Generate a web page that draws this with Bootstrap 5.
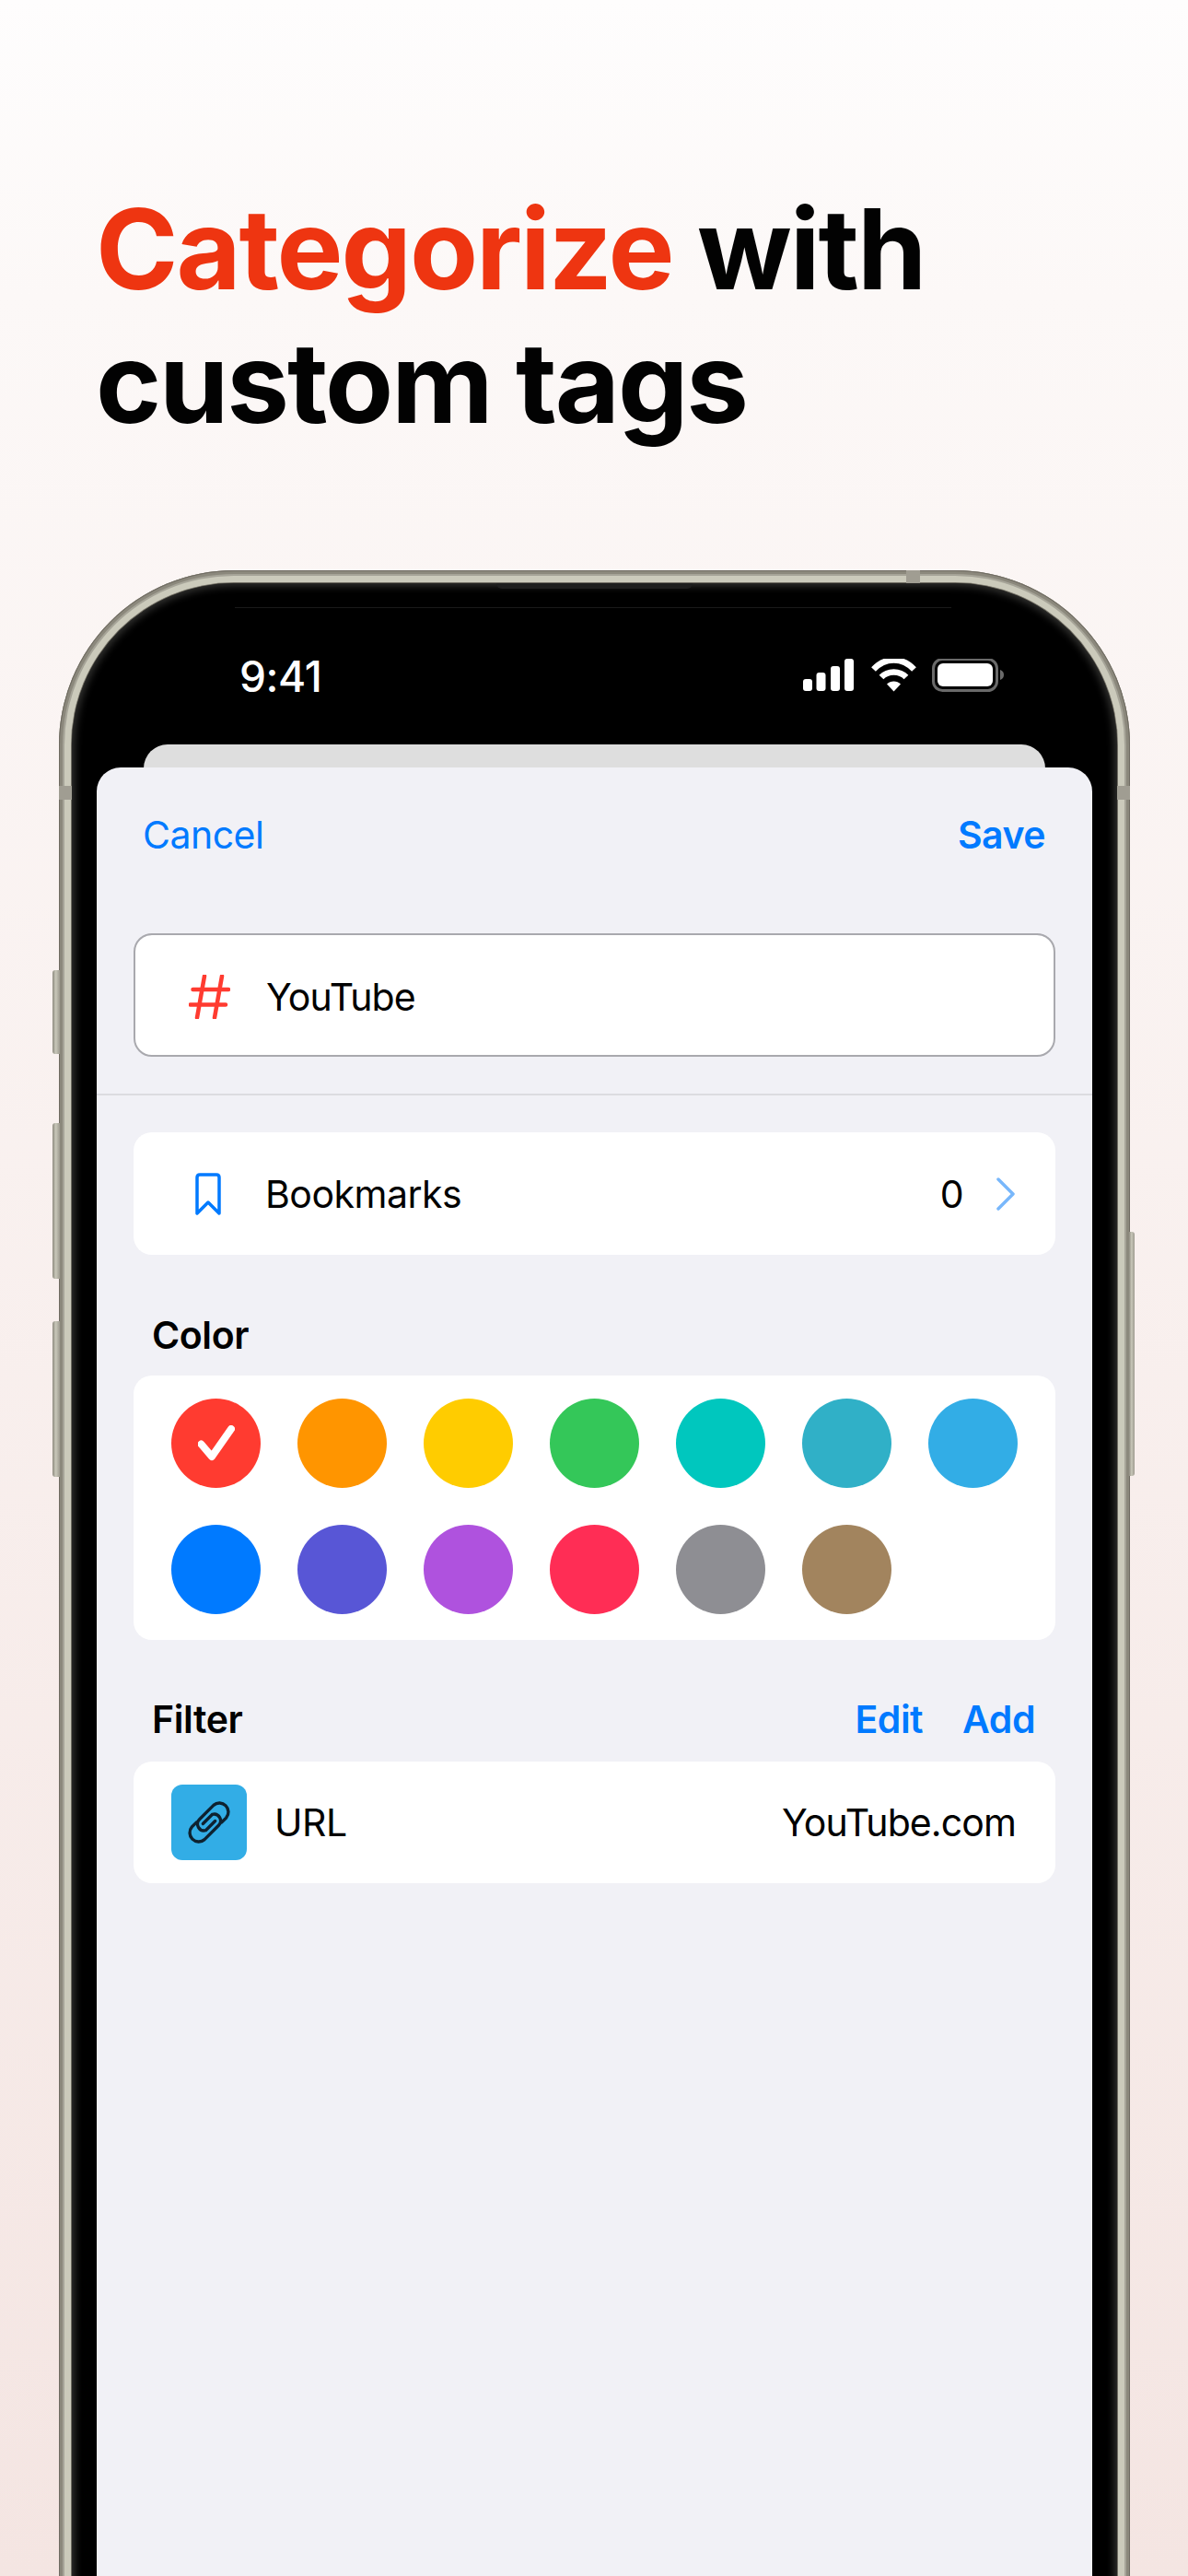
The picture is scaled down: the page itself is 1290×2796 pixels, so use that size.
<!DOCTYPE html>
<html lang="en">
<head>
<meta charset="utf-8">
<title>Categorize with custom tags</title>
<link rel="stylesheet" href="https://cdn.jsdelivr.net/npm/bootstrap@5.3.0/dist/css/bootstrap.min.css">
<style>
html,body{height:2796px;overflow:hidden}
body{background:linear-gradient(180deg,#fefdfd 0,#fcf8f7 320px,#f4e5e2 2796px);font-family:Inter,"Liberation Sans",Arial,sans-serif;color:#000}
.promo-head{font-family:Inter,"Liberation Sans",sans-serif;font-weight:700;font-size:121px;line-height:145px;letter-spacing:-2.1px;margin:0;padding:198px 0 0 104px;height:619px;color:#020202}
.promo-accent{color:#ee3511}
.phone-shell{position:relative;width:1163px;height:2300px;margin-left:64px;padding:14px;border-radius:190px 190px 0 0;background:#cbcabb;box-shadow:inset 0 0 0 1px #6f6b62,inset 0 0 0 4px #8b887c,inset 0 0 0 6px #a6a498}
.phone-inner{height:100%;background:#000;border-radius:176px 176px 0 0;box-shadow:0 0 0 1px #6e6b61,inset 0 0 9px 3px #333331;padding:0 27px;display:flex;flex-direction:column}
.side-key{position:absolute;background:linear-gradient(90deg,#8e8b80,#c8c7b9 45%,#9d9a8f);border-radius:3px 0 0 3px;width:8px;left:-7px}
.key-a{top:434px;height:91px}.key-b{top:600px;height:169px}.key-c{top:815px;height:169px}
.key-d{left:auto;right:-5px;width:6px;top:718px;height:265px;border-radius:0 3px 3px 0}
.band{position:absolute;background:#a09d92}
.band-left{left:0;top:234px;width:14px;height:15px}.band-right{right:0;top:234px;width:14px;height:15px}.band-top{left:920px;top:0;width:15px;height:14px}
.island-lip{position:absolute;left:475px;top:14px;width:213px;height:6px;background:#1e1e1e;border-radius:0 0 8px 8px}
.hair-line{position:absolute;left:191px;top:40px;width:778px;height:1px;background:#1a1a1a}
.status-row{height:175px;flex:none;padding:82px 96px 0 155px;color:#fff}
.status-time{font-size:46px;line-height:38px;font-weight:500;letter-spacing:-.4px}
.back-sheet{height:32px;margin:0 51px -7px;flex:none;background:#dedede;border-radius:26px 26px 0 0}
.sheet{flex:1;background:#f1f1f6;border-radius:26px 26px 0 0;position:relative;font-size:41px}
.sheet-bar{height:115px;padding:50px 51px 0 50px}
.link-blue{color:#007aff;font-size:41px;line-height:46px;letter-spacing:-.5px;text-decoration:none}
.link-strong{font-weight:600}
.name-field{height:134px;margin:65px 40px 0;background:#fff;border:2px solid #a9a9ae;border-radius:20px;padding:4px 0 0 58px;gap:39px}
.sheet-rule{height:2px;background:#dcdce0;margin-top:40px}
.plain-card{background:#fff;border-radius:20px;margin:0 40px}
.row-card{height:133px;margin-top:40px;padding:0 44px 0 59px;gap:48px}
.chev-icon{margin-left:-12px}
.row-text{font-size:41px;line-height:46px;letter-spacing:-.5px;color:#000}
.row-tight{letter-spacing:-.9px}
.sec-label{font-weight:600;font-size:41px;line-height:46px;letter-spacing:-.4px;padding:0 62px 0 60px}
.sec-color{margin-top:61px;height:52px;margin-bottom:18px}
.sec-filter{margin-top:60px;height:52px;margin-bottom:20px}
.swatch-grid{display:grid;grid-template-columns:repeat(7,97px);grid-auto-rows:97px;align-content:start;gap:40px;padding:25px 41px 0;height:287px}
.swatch{width:97px;height:97px;border-radius:50%;display:flex;align-items:center;justify-content:center}
.filter-card{height:132px;padding:0 43px 0 41px;gap:30px}
.tile{width:82px;height:82px;border-radius:12px;background:#32ade6;display:flex;align-items:center;justify-content:center}
.gap-filter{gap:43px}
</style>
</head>
<body>
<h1 class="promo-head"><span class="promo-accent">Categorize</span> with<br>custom tags</h1>
<div class="phone-shell">
  <span class="side-key key-a"></span><span class="side-key key-b"></span><span class="side-key key-c"></span><span class="side-key key-d"></span>
  <span class="band band-left"></span><span class="band band-right"></span><span class="band band-top"></span>
  <span class="island-lip"></span><span class="hair-line"></span>
  <div class="phone-inner">
    <div class="status-row d-flex justify-content-between align-items-start">
      <span class="status-time">9:41</span>
      <svg width="218" height="40" viewBox="0 0 218 40" aria-hidden="true">
        <rect x="0" y="22" width="10" height="13" rx="3" fill="#fff"/><rect x="14.500" y="15" width="10" height="20" rx="3" fill="#fff"/><rect x="30" y="8" width="10" height="27" rx="3" fill="#fff"/><rect x="45" y="0" width="10" height="35" rx="3" fill="#fff"/>
        <path d="M76.500 11.500C89 -2 108 -2 120.500 11.500" fill="none" stroke="#fff" stroke-width="6.500"/>
        <path d="M85 20C92 12.500 105 12.500 112 20" fill="none" stroke="#fff" stroke-width="6.500"/>
        <path d="M91 27.500C95 23.500 102 23.500 106 27.500L98.500 35.500Z" fill="#fff"/>
        <rect x="141.500" y="0.500" width="69" height="34" rx="10" fill="none" stroke="#6a6a6a" stroke-width="3"/>
        <rect x="146" y="5" width="60" height="25" rx="6" fill="#fff"/>
        <path d="M214 12C217 13 218 15 218 17.500S217 22 214 23Z" fill="#6a6a6a"/>
      </svg>
    </div>
    <div class="back-sheet"></div>
    <div class="sheet">
      <div class="sheet-bar d-flex justify-content-between align-items-start">
        <a class="link-blue" href="#">Cancel</a>
        <a class="link-blue link-strong" href="#">Save</a>
      </div>
      <div class="name-field d-flex align-items-center">
        <svg width="45" height="48" viewBox="0 0 45 48" aria-hidden="true"><path d="M17 1.500 9 46.500M36 1.500 28 46.500M4.500 16H43M1.500 32.500H40" fill="none" stroke="#ff3b30" stroke-width="4.500" stroke-linecap="round"/></svg>
        <span class="row-text row-tight">YouTube</span>
      </div>
      <div class="sheet-rule"></div>
      <div class="plain-card row-card d-flex align-items-center">
        <svg width="28" height="46" viewBox="0 0 28 46" class="ms-2" aria-hidden="true"><path d="M2 44V5C2 3 3 2 5 2H23C25 2 26 3 26 5V44L14 32Z" fill="none" stroke="#007aff" stroke-width="3.500" stroke-linejoin="round"/></svg>
        <span class="row-text flex-grow-1">Bookmarks</span>
        <span class="row-text">0</span>
        <svg width="20" height="36" viewBox="0 0 20 36" class="chev-icon" aria-hidden="true"><path d="M2 2 18 18 2 34" fill="none" stroke="#78b7fb" stroke-width="3.500" stroke-linecap="round" stroke-linejoin="round"/></svg>
      </div>
      <div class="sec-label sec-color d-flex align-items-center">Color</div>
      <div class="plain-card swatch-grid">
        <span class="swatch" style="background:#ff3b30"><svg width="40" height="40" viewBox="0 0 40 40" aria-hidden="true"><path d="M3.500 20.500 15 34 36 4" fill="none" stroke="#fff" stroke-width="8" stroke-linecap="round" stroke-linejoin="round"/></svg></span>
        <span class="swatch" style="background:#ff9500"></span>
        <span class="swatch" style="background:#ffcc00"></span>
        <span class="swatch" style="background:#34c759"></span>
        <span class="swatch" style="background:#00c7be"></span>
        <span class="swatch" style="background:#30b0c7"></span>
        <span class="swatch" style="background:#32ade6"></span>
        <span class="swatch" style="background:#007aff"></span>
        <span class="swatch" style="background:#5856d6"></span>
        <span class="swatch" style="background:#af52de"></span>
        <span class="swatch" style="background:#ff2d55"></span>
        <span class="swatch" style="background:#8e8e93"></span>
        <span class="swatch" style="background:#a2845e"></span>
      </div>
      <div class="sec-label d-flex align-items-center justify-content-between sec-filter">
        <span>Filter</span>
        <span class="d-flex link-blue link-strong gap-filter"><span>Edit</span><span>Add</span></span>
      </div>
      <div class="plain-card filter-card d-flex align-items-center">
        <span class="tile"><svg width="46" height="46" viewBox="0 0 45 45" aria-hidden="true"><g fill="none" stroke="#0e2230" stroke-width="3.300" stroke-linecap="round"><path d="M36 22.400 40.700 17.700A9.500 9.500 0 0 0 27.300 4.300L12.300 19.300A7 7 0 0 0 19 31L29 21"/><path d="M9 22.600 4.300 27.300A9.500 9.500 0 0 0 17.700 40.700L32.700 25.700A7 7 0 0 0 26 14L16 24"/></g></svg></span>
        <span class="row-text flex-grow-1">URL</span>
        <span class="row-text row-tight">YouTube.com</span>
      </div>
    </div>
  </div>
</div>
</body>
</html>
